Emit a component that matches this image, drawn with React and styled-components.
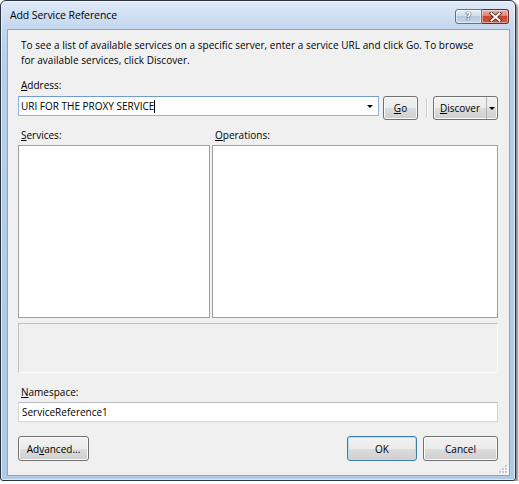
import styled, { createGlobalStyle } from 'styled-components'

const GlobalStyle = createGlobalStyle`
	html, body {
		margin: 0;
		background: #ffffff;
	}
	body {
		font-family: "Open Sans", "Noto Sans", sans-serif;
		font-size: 10px;
		color: #000000;
	}
	* {
		box-sizing: border-box;
	}
`

const Window = styled.div`
	width: 516px;
	height: 481px;
	display: flex;
	flex-direction: column;
	padding: 0 5px 4px 6px;
	border: 1px solid #2a3441;
	border-radius: 6px 6px 3px 3px;
	background: linear-gradient(to bottom, #dfeaf7 0, #c3d7ee 28px, #b7cfea 60px, #afc9e7 100%);
	box-shadow: 2px 2px 2px rgba(0, 0, 0, 0.45), inset 0 0 0 1px rgba(255, 255, 255, 0.6);
`

const TitleBar = styled.div`
	height: 28px;
	display: flex;
	align-items: flex-start;
	padding-left: 3px;
	padding-right: 1px;
`

const Title = styled.div`
	flex: 1;
	padding-top: 7px;
	font-size: 10.5px;
	line-height: 14px;
	color: #000000;
	letter-spacing: -0.1px;
`

const CaptionButtons = styled.div`
	display: flex;
	margin-top: 8px;
`

const CaptionButton = styled.div`
	width: 27px;
	height: 15px;
	display: flex;
	align-items: center;
	justify-content: center;
	border: 1px solid ${(p) => (p.$close ? '#6e2a22' : '#5d7390')};
	border-radius: ${(p) => (p.$close ? '0 3px 3px 0' : '3px 0 0 3px')};
	background: ${(p) =>
		p.$close
			? 'linear-gradient(to bottom, #e9b2a6 0, #d98473 45%, #c5452f 50%, #cf5a3f 100%)'
			: 'linear-gradient(to bottom, #eaf1f8 0, #cfdcec 45%, #b6c9e0 50%, #c6d8ed 100%)'};
	box-shadow: inset 0 0 0 1px rgba(255, 255, 255, 0.45);
	& + & {
		border-left: none;
	}
`

const HelpGlyph = styled.span`
	font-family: "DejaVu Sans", sans-serif;
	font-weight: bold;
	font-size: 10px;
	line-height: 10px;
	color: #ffffff;
	text-shadow: 0 0 1px #384a63, 0 0 1px #384a63, 0 0 1px #384a63;
`

const Client = styled.div`
	flex: 1;
	position: relative;
	display: flex;
	flex-direction: column;
	padding: 8px 11px 0 10px;
	background: #f0f0f0;
	border: 1px solid #8da5c3;
`

const Intro = styled.p`
	margin: 0;
	padding-left: 3px;
	line-height: 15px;
	letter-spacing: 0.04px;
	white-space: nowrap;
`

const Label = styled.div`
	margin-top: ${(p) => p.$top || 0}px;
	padding-left: 3px;
	line-height: 15px;
	white-space: nowrap;
`

const Key = styled.span`
	text-decoration: underline;
	text-underline-offset: 1px;
`

const AddressRow = styled.div`
	margin-top: 3px;
	display: flex;
	align-items: flex-start;
`

const Combo = styled.div`
	width: 361px;
	height: 20px;
	display: flex;
	align-items: center;
	padding: 0 2px;
	background: #ffffff;
	border: 1px solid #8cb4de;
	border-top-color: #6f9bcd;
`

const ComboText = styled.span`
	flex: 1;
	display: flex;
	align-items: center;
	white-space: nowrap;
`

const Caret = styled.span`
	width: 1px;
	height: 13px;
	background: #000000;
`

const Arrow = styled.span`
	width: 0;
	height: 0;
	margin-right: ${(p) => p.$right || 0}px;
	border-left: 3px solid transparent;
	border-right: 3px solid transparent;
	border-top: 3px solid #000000;
`

const Button = styled.div`
	width: ${(p) => p.$width}px;
	height: ${(p) => p.$height || 24}px;
	margin-left: ${(p) => p.$left || 0}px;
	display: flex;
	align-items: center;
	justify-content: center;
	white-space: nowrap;
	border: 1px solid ${(p) => (p.$default ? '#3c7fb1' : '#707070')};
	border-radius: 3px;
	background: linear-gradient(to bottom, #f2f2f2 0, #ebebeb 50%, #dddddd 50%, #cfcfcf 100%);
	box-shadow: inset 0 0 0 1px ${(p) => (p.$default ? '#b4def4' : '#fbfbfb')};
`

const SplitButton = styled(Button)`
	justify-content: flex-start;
	padding: 0;
`

const SplitMain = styled.span`
	width: 53px;
	height: 100%;
	display: flex;
	align-items: center;
	justify-content: center;
	border-right: 1px solid #b4b4b4;
`

const SplitArrow = styled.span`
	flex: 1;
	height: 100%;
	display: flex;
	align-items: center;
	justify-content: center;
`

const Separator = styled.div`
	width: 2px;
	height: 20px;
	margin: 2px 5px 0 8px;
	border-left: 1px solid #cfcfcf;
	border-right: 1px solid #ffffff;
`

const ListGrid = styled.div`
	display: grid;
	grid-template-columns: 192px 286px;
	column-gap: 2px;
`

const ListLabels = styled(ListGrid)`
	margin-top: 8px;
`

const Lists = styled(ListGrid)`
	margin-top: 2px;
	height: 173px;
`

const ListBox = styled.div`
	background: #ffffff;
	border: 1px solid #9ca0a7;
`

const StatusBox = styled.div`
	margin-top: 5px;
	height: 50px;
	border: 1px solid;
	border-color: #c2c2c2 #fbfbfb #fbfbfb #c2c2c2;
`

const TextBox = styled.div`
	margin-top: 2px;
	height: 20px;
	display: flex;
	align-items: center;
	padding: 0 3px;
	background: #ffffff;
	border: 1px solid #d3d6db;
	border-top-color: #b7bac0;
`

const ButtonRow = styled.div`
	margin-top: 14px;
	display: flex;
	align-items: flex-start;
`

const Spacer = styled.div`
	flex: 1;
`

const Grip = styled.svg`
	position: absolute;
	right: 1px;
	bottom: 1px;
`

const CloseIcon = () => (
	<svg width='13' height='10' viewBox='0 0 13 10'>
		<path d='M2.5 1.5 L10.5 8.5 M10.5 1.5 L2.5 8.5' stroke='#5a1d15' strokeWidth='3.6' strokeLinecap='square' />
		<path d='M2.5 1.5 L10.5 8.5 M10.5 1.5 L2.5 8.5' stroke='#ffffff' strokeWidth='2' strokeLinecap='square' />
	</svg>
)

const ResizeGrip = () => (
	<Grip width='10' height='10' viewBox='0 0 10 10'>
		{[[7, 1], [4, 4], [7, 4], [1, 7], [4, 7], [7, 7]].map(([x, y]) => (
			<g key={`${x}-${y}`}>
				<rect x={x + 1} y={y + 1} width='2' height='2' fill='#ffffff' />
				<rect x={x} y={y} width='2' height='2' fill='#c4c8cf' />
			</g>
		))}
	</Grip>
)

const App = () => {
	return (
		<>
			<GlobalStyle />
			<Window>
				<TitleBar>
					<Title>Add Service Reference</Title>
					<CaptionButtons>
						<CaptionButton>
							<HelpGlyph>?</HelpGlyph>
						</CaptionButton>
						<CaptionButton $close>
							<CloseIcon />
						</CaptionButton>
					</CaptionButtons>
				</TitleBar>
				<Client>
					<Intro>
						To see a list of available services on a specific server, enter a service URL and click Go. To browse
						<br />
						for available services, click Discover.
					</Intro>

					<Label $top={10}>
						<Key>A</Key>ddress:
					</Label>
					<AddressRow>
						<Combo>
							<ComboText>
								URI FOR THE PROXY SERVICE
								<Caret />
							</ComboText>
							<Arrow $right={3} />
						</Combo>
						<Button $width={35} $left={4}>
							<Key>G</Key>o
						</Button>
						<Separator />
						<SplitButton $width={65}>
							<SplitMain>
								<Key>D</Key>iscover
							</SplitMain>
							<SplitArrow>
								<Arrow />
							</SplitArrow>
						</SplitButton>
					</AddressRow>

					<ListLabels>
						<Label>
							<Key>S</Key>ervices:
						</Label>
						<Label>
							<Key>O</Key>perations:
						</Label>
					</ListLabels>
					<Lists>
						<ListBox />
						<ListBox />
					</Lists>

					<StatusBox />

					<Label $top={12}>
						<Key>N</Key>amespace:
					</Label>
					<TextBox>ServiceReference1</TextBox>

					<ButtonRow>
						<Button $width={71} $height={25}>
							Ad<Key>v</Key>anced...
						</Button>
						<Spacer />
						<Button $width={70} $height={25} $default>
							OK
						</Button>
						<Button $width={75} $height={25} $left={6}>
							Cancel
						</Button>
					</ButtonRow>
					<ResizeGrip />
				</Client>
			</Window>
		</>
	)
}

export default App
